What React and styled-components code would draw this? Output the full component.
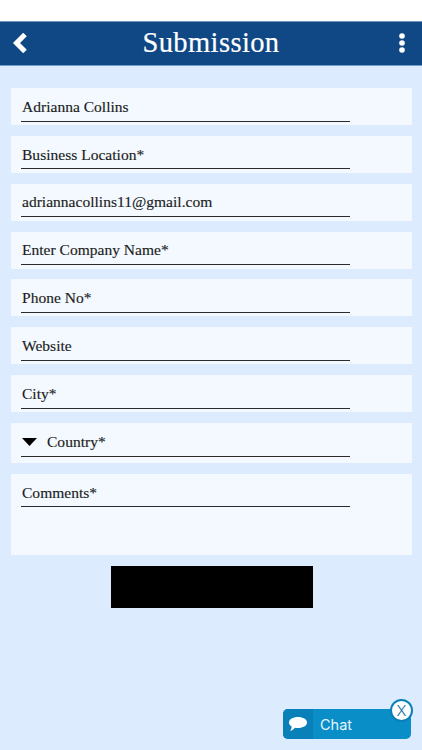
import React from "react";
import styled, { createGlobalStyle } from "styled-components";

const GlobalStyle = createGlobalStyle`
  html, body {
    margin: 0;
    padding: 0;
    background: #fff;
  }
`;

const Page = styled.div`
  position: relative;
  width: 422px;
  height: 750px;
  overflow: hidden;
  padding-top: 21px;
  box-sizing: border-box;
  font-family: "Liberation Serif", serif;
`;

const Header = styled.header`
  height: 45px;
  box-sizing: border-box;
  padding: 0 12px 2px;
  display: grid;
  grid-template-columns: 1fr auto 1fr;
  align-items: center;
  background-color: #0f4884;
  border-top: 1px solid #6f94bd;
  border-bottom: 1px solid #6f9fcf;
`;

const Title = styled.h1`
  margin: 0;
  font-size: 28.5px;
  font-weight: normal;
  letter-spacing: 0.4px;
  color: #fff;
  -webkit-text-stroke: 0.2px #fff;
`;

const MenuDots = styled.svg`
  justify-self: end;
  margin-right: 5px;
`;

const Body = styled.main`
  height: 684px;
  box-sizing: border-box;
  padding: 22px 10px 0 11px;
  display: flex;
  flex-direction: column;
  align-items: stretch;
  background-color: #dcebfd;
`;

const Field = styled.div`
  height: ${(p) => p.$height || 37}px;
  margin-bottom: 10.86px;
  box-sizing: border-box;
  padding-top: 8px;
  background-color: #f3f9fe;
`;

const FieldLine = styled.div`
  width: 329px;
  height: 25.5px;
  margin-left: 10px;
  box-sizing: border-box;
  padding: 0 0 3px 1px;
  display: flex;
  align-items: center;
  gap: 10px;
  border-bottom: 1.5px solid #2b2b2b;
  font-size: 15.5px;
  letter-spacing: 0.02px;
  color: #1c1c1c;
  -webkit-text-stroke: 0.15px #1c1c1c;
`;

const Submit = styled.div`
  width: 202px;
  height: 42px;
  margin-left: 100px;
  background-color: #000;
`;

const ChatBox = styled.div`
  position: absolute;
  left: 283px;
  top: 709px;
  width: 128px;
  height: 30px;
  display: flex;
  border-radius: 5px;
  background-color: #0a8ec8;
  font-family: Inter, sans-serif;
  font-size: 14.5px;
  color: #e4f5fd;
`;

const ChatIcon = styled.div`
  width: 30px;
  display: flex;
  align-items: center;
  justify-content: center;
  border-radius: 5px 0 0 5px;
  background-color: #0a80b9;
`;

const ChatLabel = styled.span`
  margin-left: 7px;
  line-height: 31px;
`;

const CloseButton = styled.div`
  position: absolute;
  right: -2px;
  top: -10px;
  width: 19px;
  height: 19px;
  display: flex;
  align-items: center;
  justify-content: center;
  border: 2px solid #0a80b9;
  border-radius: 50%;
  background-color: #fff;
  font-size: 15px;
  font-weight: 300;
  color: #0a6f9f;
`;

const fields = [
  { label: "Adrianna Collins" },
  { label: "Business Location*" },
  { label: "adriannacollins11@gmail.com" },
  { label: "Enter Company Name*" },
  { label: "Phone No*" },
  { label: "Website" },
  { label: "City*" },
];

export default function App() {
  return (
    <Page>
      <GlobalStyle />
      <Header>
        <svg width="16" height="20" viewBox="0 0 16 20">
          <path d="M13 1.5 L4.5 10 L13 18.5" fill="none" stroke="#fff" strokeWidth="5" />
        </svg>
        <Title>Submission</Title>
        <MenuDots width="6" height="20" viewBox="0 0 6 20">
          <circle cx="3" cy="3" r="2.8" fill="#fff" />
          <circle cx="3" cy="10" r="2.8" fill="#fff" />
          <circle cx="3" cy="17" r="2.8" fill="#fff" />
        </MenuDots>
      </Header>
      <Body>
        {fields.map((f) => (
          <Field key={f.label}>
            <FieldLine>{f.label}</FieldLine>
          </Field>
        ))}
        <Field $height={40}>
          <FieldLine>
            <svg width="15" height="8" viewBox="0 0 15 8">
              <path d="M0 0 H15 L7.5 8 Z" fill="#000" />
            </svg>
            Country*
          </FieldLine>
        </Field>
        <Field $height={81}>
          <FieldLine>Comments*</FieldLine>
        </Field>
        <Submit />
      </Body>
      <ChatBox>
        <ChatIcon>
          <svg width="20" height="16" viewBox="0 0 20 16">
            <path
              d="M10 1 C15 1 19 3.3 19 6.5 C19 9.7 15 12 10 12 C9 12 8 11.9 7 11.7 C5.8 13.2 4 14.5 2 15 C3 13.8 3.6 12.3 3.7 10.6 C2 9.6 1 8.1 1 6.5 C1 3.3 5 1 10 1 Z"
              fill="#fff"
            />
          </svg>
        </ChatIcon>
        <ChatLabel>Chat</ChatLabel>
        <CloseButton>X</CloseButton>
      </ChatBox>
    </Page>
  );
}
